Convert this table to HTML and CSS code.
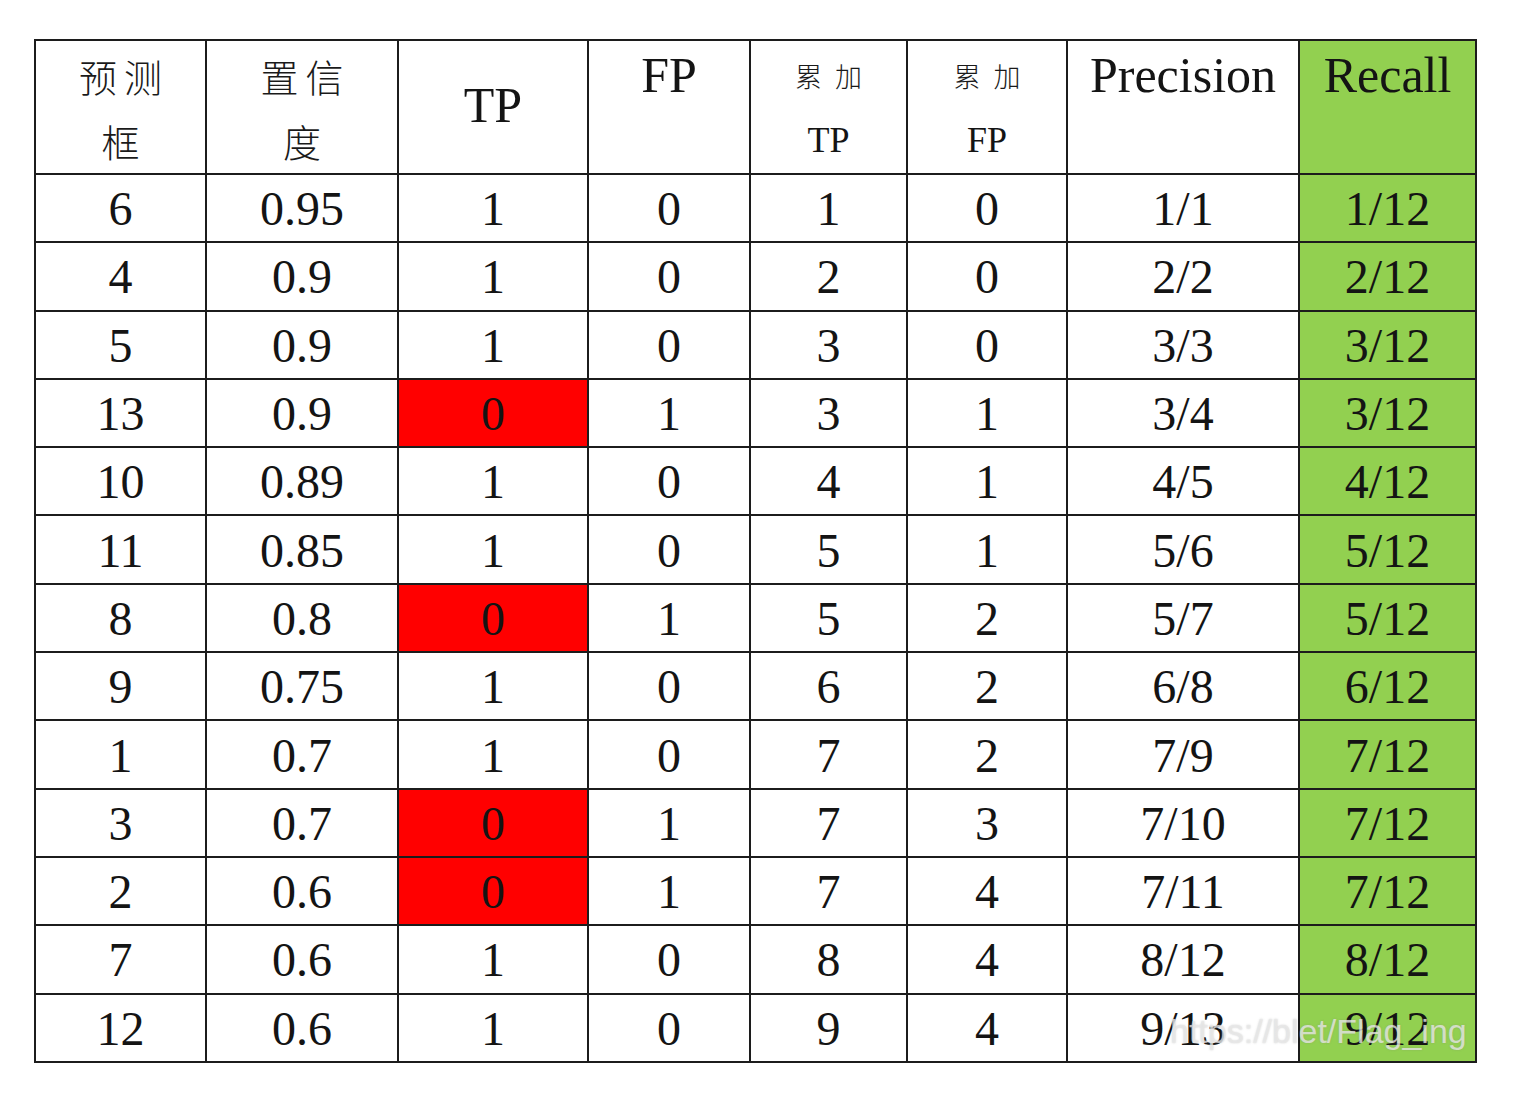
FILE: index.html
```html
<!DOCTYPE html>
<html lang="zh">
<head>
<meta charset="utf-8">
<title>TP/FP Precision Recall</title>
<link rel="stylesheet" href="styles.css">
</head>
<body>
<div class="wrap">
<table class="pr">
  <colgroup>
    <col class="c1"><col class="c2"><col class="c3"><col class="c4"><col class="c5"><col class="c6"><col class="c7"><col class="c8">
  </colgroup>
  <thead>
    <tr class="head">
      <th class="top"><div class="ln cjk big">预测</div><div class="ln cjk big">框</div></th>
      <th class="top"><div class="ln cjk big">置信</div><div class="ln cjk big">度</div></th>
      <th class="mid">TP</th>
      <th class="top"><div class="ln">FP</div></th>
      <th class="top"><div class="ln cjk small">累加</div><div class="ln sub">TP</div></th>
      <th class="top"><div class="ln cjk small">累加</div><div class="ln sub">FP</div></th>
      <th class="top"><div class="ln">Precision</div></th>
      <th class="top green"><div class="ln">Recall</div></th>
    </tr>
  </thead>
  <tbody>
    <tr><td>6</td><td>0.95</td><td>1</td><td>0</td><td>1</td><td>0</td><td>1/1</td><td class="green">1/12</td></tr>
    <tr><td>4</td><td>0.9</td><td>1</td><td>0</td><td>2</td><td>0</td><td>2/2</td><td class="green">2/12</td></tr>
    <tr><td>5</td><td>0.9</td><td>1</td><td>0</td><td>3</td><td>0</td><td>3/3</td><td class="green">3/12</td></tr>
    <tr><td>13</td><td>0.9</td><td class="red">0</td><td>1</td><td>3</td><td>1</td><td>3/4</td><td class="green">3/12</td></tr>
    <tr><td>10</td><td>0.89</td><td>1</td><td>0</td><td>4</td><td>1</td><td>4/5</td><td class="green">4/12</td></tr>
    <tr><td>11</td><td>0.85</td><td>1</td><td>0</td><td>5</td><td>1</td><td>5/6</td><td class="green">5/12</td></tr>
    <tr><td>8</td><td>0.8</td><td class="red">0</td><td>1</td><td>5</td><td>2</td><td>5/7</td><td class="green">5/12</td></tr>
    <tr><td>9</td><td>0.75</td><td>1</td><td>0</td><td>6</td><td>2</td><td>6/8</td><td class="green">6/12</td></tr>
    <tr><td>1</td><td>0.7</td><td>1</td><td>0</td><td>7</td><td>2</td><td>7/9</td><td class="green">7/12</td></tr>
    <tr><td>3</td><td>0.7</td><td class="red">0</td><td>1</td><td>7</td><td>3</td><td>7/10</td><td class="green">7/12</td></tr>
    <tr><td>2</td><td>0.6</td><td class="red">0</td><td>1</td><td>7</td><td>4</td><td>7/11</td><td class="green">7/12</td></tr>
    <tr><td>7</td><td>0.6</td><td>1</td><td>0</td><td>8</td><td>4</td><td>8/12</td><td class="green">8/12</td></tr>
    <tr><td>12</td><td>0.6</td><td>1</td><td>0</td><td>9</td><td>4</td><td>9/13</td><td class="green">9/12</td></tr>
  </tbody>
</table>
<div class="watermark">https://blet/Flag_ing</div>
</div>
</body>
</html>
```

FILE: styles.css
```css
html, body {
  margin: 0;
  padding: 0;
  background: #ffffff;
}

.wrap {
  position: relative;
  width: 1515px;
  height: 1104px;
  padding: 39px 0 0 34px;
  box-sizing: border-box;
}

.pr {
  border-collapse: collapse;
  table-layout: fixed;
  width: 1441px;
  font-family: "Liberation Serif", "Times New Roman", serif;
  color: #141414;
}

.c1 { width: 171px; }
.c2 { width: 192px; }
.c3 { width: 190px; }
.c4 { width: 162px; }
.c5 { width: 157px; }
.c6 { width: 160px; }
.c7 { width: 232px; }
.c8 { width: 177px; }

.pr th,
.pr td {
  border: 2px solid #1c1c1c;
  padding: 0;
  text-align: center;
  font-weight: normal;
}

.pr td {
  height: 64.3px;
  font-size: 48px;
  line-height: 50px;
  vertical-align: middle;
  padding-top: 2px;
}

.head th {
  height: 128px;
  font-size: 50px;
  line-height: 64px;
  overflow: hidden;
}

.head th.top {
  vertical-align: top;
  padding-top: 2px;
}

.head th.mid {
  vertical-align: middle;
  padding-bottom: 4px;
}

.ln {
  height: 65px;
  line-height: 65px;
  white-space: nowrap;
}

.cjk {
  font-family: "Noto Sans CJK SC", "Noto Sans CJK JP", sans-serif;
  font-weight: 300;
  color: #1a1a1a;
}

.cjk.big {
  font-size: 38px;
  letter-spacing: 7px;
  padding-left: 7px;
}

.cjk.small {
  font-size: 27px;
  letter-spacing: 13px;
  padding-left: 13px;
}

.sub {
  font-size: 36px;
}

.green {
  background: #92d050;
}

.red {
  background: #ff0000;
}

.watermark {
  position: absolute;
  left: 1170px;
  top: 1012px;
  font-family: "Liberation Sans", Arial, sans-serif;
  font-size: 34px;
  color: rgba(235, 235, 235, 0.75);
  text-shadow: 0 0 2px rgba(120, 120, 120, 0.35);
  white-space: nowrap;
}
```
